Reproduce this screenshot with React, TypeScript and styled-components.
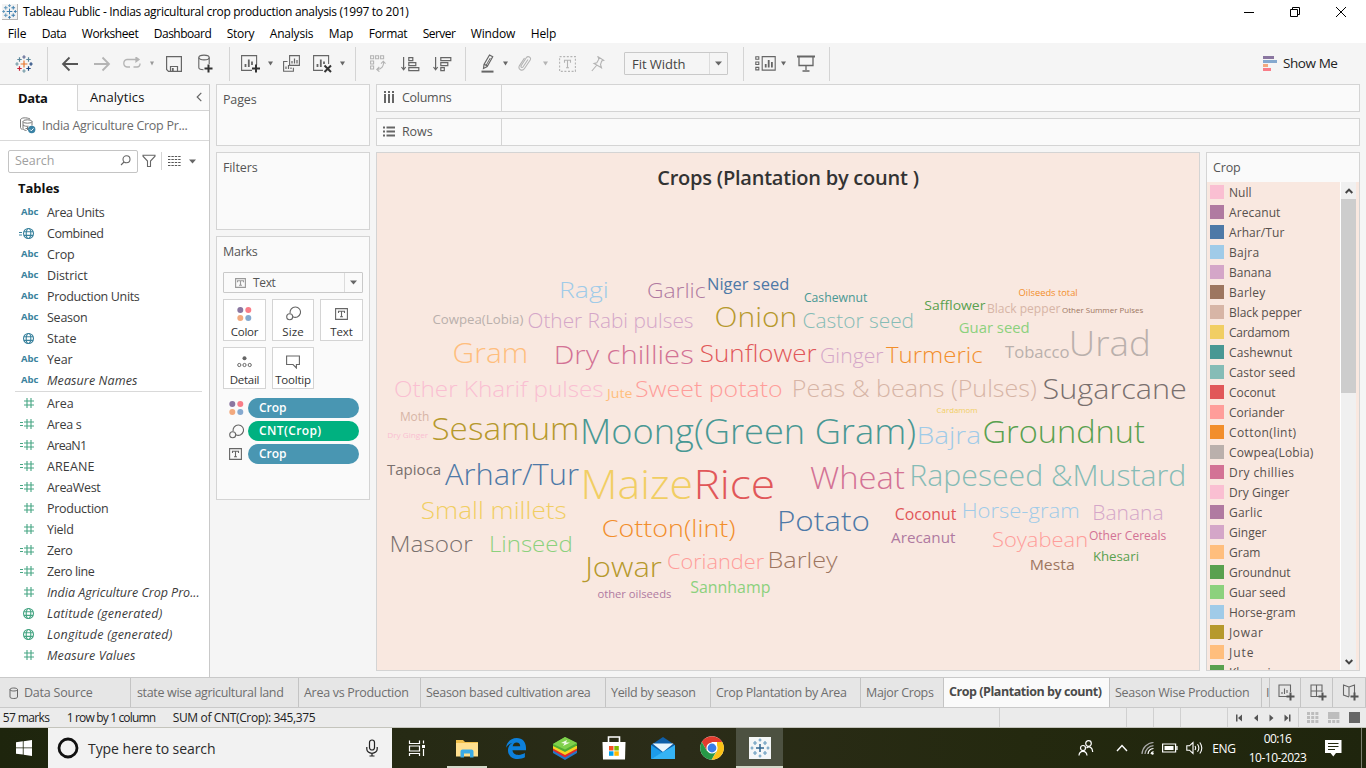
import React, { useLayoutEffect, useRef, useState } from "react";
import styled, { createGlobalStyle, css } from "styled-components";

const GlobalStyle = createGlobalStyle`
  * { box-sizing: border-box; }
  html, body { margin: 0; padding: 0; overflow: hidden; }
  body { font-family: "Open Sans", "Noto Sans", sans-serif; font-size: 12px; color: #333; background: #f5f5f5; }
  svg { display: block; flex: none; }
`;

/* ---------- text that tracks itself to a given width ---------- */

const Tracked = styled.span`
  display: inline-block;
  white-space: pre;
  flex: none;
`;

function Fit({ w, children }: { w: number; children: string }) {
  const ref = useRef<HTMLSpanElement>(null);
  const [spacing, setSpacing] = useState(0);
  useLayoutEffect(() => {
    if (ref.current) {
      const natural = ref.current.getBoundingClientRect().width;
      setSpacing((w + 0.5 - natural) / children.length);
    }
  }, [w, children]);
  return (
    <Tracked ref={ref} style={{ letterSpacing: `${spacing}px` }}>
      {children}
    </Tracked>
  );
}

/* ---------- shell ---------- */

const Window = styled.div`
  width: 1366px;
  height: 768px;
  display: flex;
  flex-direction: column;
  background: #f5f5f5;
  overflow: hidden;
`;

const TitleBar = styled.header`
  height: 23px;
  flex: none;
  display: flex;
  align-items: center;
  background: #fff;
  padding-left: 2px;
  color: #000;
  font-size: 12px;
`;
const AppIcon = styled.div`
  width: 16px;
  height: 16px;
  margin: 0 5px 0 0;
  background: #f3f3f3;
  border-right: 1px solid #b5b5b5;
  border-bottom: 1px solid #b5b5b5;
`;
const WindowButtons = styled.div`
  margin-left: auto;
  display: flex;
  align-items: center;
  height: 21px;
  padding-right: 2px;
`;
const WindowButton = styled.div`
  width: 46px;
  display: flex;
  justify-content: center;
`;

const MenuBar = styled.nav`
  height: 20px;
  flex: none;
  display: flex;
  align-items: center;
  gap: 16px;
  padding: 1px 0 0 8px;
  background: #fff;
  color: #000;
  font-size: 12px;
`;

const Toolbar = styled.div`
  height: 41px;
  flex: none;
  display: flex;
  align-items: center;
  background: #f5f5f5;
`;
const Cell = styled.div<{ $w: number }>`
  width: ${(p) => p.$w}px;
  flex: none;
  display: flex;
  justify-content: center;
  align-items: center;
`;
const Rule = styled.div<{ $h?: number }>`
  width: 1px;
  height: ${(p) => p.$h ?? 34}px;
  flex: none;
  background: #d4d4d4;
`;
const FitSelect = styled.div`
  width: 104px;
  height: 23px;
  flex: none;
  display: flex;
  align-items: center;
  border: 1px solid #c9c9c9;
  border-radius: 1px;
  background: #f5f5f5;
  font-size: 13px;
  line-height: 18px;
  color: #444;
  padding-left: 7px;
`;
const SelectArrow = styled.div<{ $w: number }>`
  margin-left: auto;
  width: ${(p) => p.$w}px;
  height: 100%;
  border-left: 1px solid #dcdcdc;
  display: flex;
  align-items: center;
  justify-content: center;
`;
const ShowMe = styled.div`
  margin-left: auto;
  display: flex;
  align-items: center;
  gap: 6px;
  width: 103px;
  height: 22px;
  margin-bottom: 1px;
  font-size: 13.5px;
  color: #222;
`;

const Workspace = styled.main`
  height: 593px;
  flex: none;
  display: flex;
`;

/* ---------- data pane ---------- */

const DataPane = styled.aside`
  width: 210px;
  flex: none;
  background: #fff;
  border-right: 1px solid #c9c9c9;
  border-top: 1px solid #d4d4d4;
`;
const PaneTabs = styled.div`
  height: 26px;
  display: flex;
`;
const PaneTab = styled.div<{ $active?: boolean }>`
  display: flex;
  align-items: center;
  font-size: 13px;
  padding-bottom: 1px;
  color: #111;
  ${(p) =>
    p.$active
      ? css`
          width: 77px;
          padding-left: 18px;
          font-weight: 700;
        `
      : css`
          flex: 1;
          padding-right: 7px;
          padding-left: 12px;
          background: #fafafa;
          border-left: 1px solid #d4d4d4;
          border-bottom: 1px solid #d4d4d4;
          justify-content: space-between;
        `}
`;
const SourceRow = styled.div`
  height: 30px;
  display: flex;
  align-items: center;
  gap: 6px;
  padding-left: 19px;
  font-size: 12.5px;
  color: #6c6c6c;
  border-bottom: 1px solid #d9d9d9;
`;
const SearchRow = styled.div`
  display: flex;
  align-items: center;
  height: 24px;
  margin: 8px 0 0 8px;
`;
const SearchBox = styled.div`
  width: 130px;
  height: 23px;
  display: flex;
  align-items: center;
  justify-content: space-between;
  border: 1px solid #c4c4c4;
  border-radius: 2px;
  padding: 0 6px;
  font-size: 12.5px;
  line-height: 17px;
  padding-bottom: 1px;
  color: #a0a0a0;
`;
const TablesTitle = styled.div`
  height: 29px;
  padding: 5px 0 0 18px;
  font-size: 13px;
  font-weight: 700;
  line-height: 20px;
  color: #111;
`;
const Field = styled.div<{ $generated?: boolean }>`
  height: 21px;
  display: flex;
  align-items: center;
  font-size: 12.5px;
  line-height: 17px;
  padding-bottom: 1px;
  color: #3c3c3c;
  font-style: ${(p) => (p.$generated ? "italic" : "normal")};
`;
const FieldIcon = styled.div`
  width: 47px;
  padding-left: 19px;
  font-style: normal;
`;
const Abc = styled.span`
  font: 700 9.5px/20px "Open Sans", sans-serif;
  color: #3a829d;
  padding-left: 2px;
`;
const FieldRule = styled.div`
  height: 1px;
  margin: 0 7px 1px 15px;
  background: #d9d9d9;
`;

/* ---------- shelves & cards ---------- */

const CardColumn = styled.div`
  width: 154px;
  margin-left: 6px;
  flex: none;
  display: flex;
  flex-direction: column;
`;
const Card = styled.section<{ $h: number; $gap: number }>`
  height: ${(p) => p.$h}px;
  margin-bottom: ${(p) => p.$gap}px;
  flex: none;
  border: 1px solid #d4d4d4;
  background: #fafafa;
  padding: 6px;
`;
const CardTitle = styled.div`
  font-size: 12.5px;
  line-height: 18px;
  color: #555;
`;
const MarkSelect = styled.div`
  height: 21px;
  margin: 11px 0 6px;
  display: flex;
  align-items: center;
  gap: 7px;
  border: 1px solid #c9c9c9;
  border-radius: 1px;
  background: #fafafa;
  padding-left: 11px;
  font-size: 12px;
  color: #555;
`;
const MarkGrid = styled.div`
  display: grid;
  grid-template-columns: 43px 42px 43px;
  grid-auto-rows: 42px;
  gap: 6px;
`;
const MarkButton = styled.div`
  border: 1px solid #d4d4d4;
  background: #fff;
  display: flex;
  flex-direction: column;
  align-items: center;
  font-size: 11.5px;
  line-height: 14px;
  color: #333;
`;
const MarkGlyph = styled.div`
  height: 25px;
  padding-top: 2px;
  display: flex;
  align-items: center;
`;
const Pills = styled.div`
  display: flex;
  flex-direction: column;
  gap: 3px;
  padding: 9px 4px 0 6px;
`;
const PillRow = styled.div`
  height: 20px;
  display: flex;
  align-items: center;
  justify-content: space-between;
`;
const Pill = styled.div<{ $green?: boolean }>`
  width: 111px;
  height: 20px;
  border-radius: 10px;
  background: ${(p) => (p.$green ? "#00b180" : "#4996b2")};
  color: #fff;
  font-size: 12px;
  font-weight: 600;
  line-height: 19px;
  padding-left: 11px;
`;

const Main = styled.div`
  width: 984px;
  margin-left: 6px;
  display: flex;
  flex-direction: column;
`;
const Shelf = styled.div`
  height: 28px;
  margin-bottom: 6px;
  flex: none;
  display: flex;
  border: 1px solid #d4d4d4;
  background: #fafafa;
`;
const ShelfLabel = styled.div<{ $gap: number }>`
  width: 125px;
  display: flex;
  align-items: center;
  gap: ${(p) => p.$gap}px;
  padding: 0 0 1px 6px;
  border-right: 1px solid #d4d4d4;
  font-size: 12.5px;
  line-height: 17px;
  color: #555;
`;
const ViewRow = styled.div`
  height: 519px;
  display: flex;
  gap: 6px;
`;
const View = styled.section`
  width: 824px;
  border: 1px solid #d4d4d4;
  background: #f9e8e0;
`;
const ViewTitle = styled.h1`
  margin: 0;
  height: 50px;
  text-align: center;
  font-size: 20px;
  font-weight: 600;
  line-height: 50px;
  color: #333;
`;
const CloudWord = styled.text<{ $small: boolean }>`
  font-family: "Open Sans", "Noto Sans", sans-serif;
  font-weight: ${(p) => (p.$small ? 400 : 300)};
`;

const Legend = styled.section`
  width: 154px;
  border: 1px solid #d4d4d4;
  background: #fafafa;
  display: flex;
  flex-direction: column;
`;
const LegendTitle = styled.div`
  height: 29px;
  flex: none;
  padding: 0 6px;
  font-size: 12.5px;
  line-height: 30px;
  color: #555;
`;
const LegendBody = styled.div`
  flex: 1;
  min-height: 0;
  display: flex;
  background: #f9e8e0;
`;
const LegendList = styled.div`
  width: 134px;
  overflow: hidden;
  border-right: 1px solid #fff;
`;
const LegendItem = styled.div`
  height: 20px;
  display: flex;
  align-items: center;
  gap: 5px;
  padding-left: 3px;
  font-size: 12px;
  color: #57504d;
`;
const Swatch = styled.i<{ $c: string }>`
  width: 14px;
  height: 14px;
  background: ${(p) => p.$c};
`;
const Scrollbar = styled.div`
  width: 15px;
  display: flex;
  flex-direction: column;
  align-items: center;
  background: #f0f0f0;
`;
const ScrollArrow = styled.div`
  height: 17px;
  display: flex;
  align-items: center;
`;
const Thumb = styled.div`
  width: 15px;
  height: 194px;
  margin-bottom: auto;
  background: #cdcdcd;
`;

/* ---------- sheet tabs, status, taskbar ---------- */

const SheetTabs = styled.div`
  height: 31px;
  flex: none;
  display: flex;
  background: #e6e6e6;
  border-top: 1px solid #c9c9c9;
  border-bottom: 1px solid #c9c9c9;
`;
const SheetTab = styled.div<{ $w: number; $active?: boolean; $pad?: number }>`
  width: ${(p) => p.$w}px;
  flex: none;
  overflow: hidden;
  display: flex;
  align-items: center;
  gap: 5px;
  padding: 0 0 ${(p) => (p.$active ? 2 : 0)}px ${(p) => p.$pad ?? 5}px;
  border-right: 1px solid #c4c4c4;
  font-size: 12.5px;
  background: ${(p) => (p.$active ? "#fafafa" : "transparent")};
  font-weight: ${(p) => (p.$active ? 700 : 400)};
  color: ${(p) => (p.$active ? "#4a4a4a" : "#6e6e6e")};
`;
const StatusBar = styled.footer`
  height: 20px;
  flex: none;
  display: flex;
  align-items: center;
  gap: 18px;
  padding-left: 3px;
  background: #ebebeb;
  font-size: 12px;
  color: #222;
  border-bottom: 1px solid #c4c4bc;
`;
const StatusRight = styled.div`
  margin-left: auto;
  height: 100%;
  display: flex;
`;
const StatusSlot = styled.div<{ $w: number }>`
  width: ${(p) => p.$w}px;
  height: 100%;
  border-left: 1px solid #d0d0d0;
  display: flex;
  align-items: center;
`;

const Taskbar = styled.div`
  height: 40px;
  flex: none;
  display: flex;
  background: linear-gradient(90deg, #1e250d 0, #262a14 30%, #2b2c18 50%, #24290f 75%, #1f250d 100%);
  color: #fff;
`;
const TaskSearch = styled.div`
  width: 344px;
  display: flex;
  align-items: center;
  background: #f2f2f2;
  color: #2b2b2b;
  font-size: 14px;
  padding: 0 13px 0 9px;
`;
const TaskLabel = styled.div`
  margin: 0 auto 0 9px;
`;
const TaskItem = styled.div<{ $w: number; $active?: boolean; $open?: boolean }>`
  width: ${(p) => p.$w}px;
  flex: none;
  display: flex;
  align-items: center;
  justify-content: center;
  background: ${(p) => (p.$active ? "#4d5141" : "transparent")};
  box-shadow: ${(p) => (p.$open ? "inset 0 -2px 0 #d3d9c9" : "none")};
`;
const Tray = styled.div`
  margin-left: auto;
  display: flex;
  align-items: center;
  font-size: 12px;
`;
const Clock = styled.div`
  width: 81px;
  text-align: center;
  line-height: 19px;
  padding-bottom: 1px;
`;
const DesktopEdge = styled.div`
  width: 5px;
  height: 40px;
  border-left: 1px solid #7b7e70;
`;

/* ---------- icons ---------- */

function Ic({ w, h, c = "none", s = "#666", sw = 1, children }: { w: number; h: number; c?: string; s?: string; sw?: number; children: React.ReactNode }) {
  return (
    <svg width={w} height={h} viewBox={`0 0 ${w} ${h}`} fill={c} stroke={s} strokeWidth={sw}>
      {children}
    </svg>
  );
}

const Caret = ({ c = "#666", w = 5 }: { c?: string; w?: number }) => (
  <Ic w={w + 2} h={5} c={c} s="none">
    <path d={`M1 0.5h${w}l${-w / 2} 4z`} />
  </Ic>
);

function Sparkle({ size, colors }: { size: number; colors: string[] }) {
  const pluses: [number, number, number, number][] = [
    [9, 9, 3.4, 0],
    [9, 2, 1.7, 1],
    [9, 16, 1.7, 2],
    [2, 9, 1.7, 3],
    [16, 9, 1.7, 4],
    [4.5, 4.5, 2.2, 5],
    [13.5, 4.5, 2.2, 6],
    [4.5, 13.5, 2.2, 7],
    [13.5, 13.5, 2.2, 8],
  ];
  return (
    <svg width={size} height={size} viewBox="0 0 18 18" fill="none" strokeWidth="1.2">
      {pluses.map(([x, y, r, i]) => (
        <path key={i} stroke={colors[i % colors.length]} d={`M${x - r} ${y}h${2 * r}M${x} ${y - r}v${2 * r}`} />
      ))}
    </svg>
  );
}

const Arrow = ({ flip, c }: { flip?: boolean; c: string }) => (
  <Ic w={18} h={16} s={c} sw={1.8}>
    <path d={flip ? "M1 8h15M9.500 1.500L16 8l-6.500 6.500" : "M17 8H2M8.500 1.500L2 8l6.500 6.500"} />
  </Ic>
);
const Loop = () => (
  <Ic w={20} h={13} s="#b4b4b4" sw={1.3}>
    <path d="M8 10H5a3.800 3.800 0 0 1 0-7.500h11" />
    <path d="M11.500 10H15a3 3 0 0 0 3-3.500" />
    <path d="M14 .3l3 2.200-3 2.300z" fill="#b4b4b4" />
  </Ic>
);
const Save = () => (
  <Ic w={16} h={16} sw={1.2}>
    <path d="M.6.6h14.800v14.800H2.500L.6 13.500zM4.500 15v-4.500h7V15" />
    <path d="M6.800 12v3" strokeWidth="1.800" />
  </Ic>
);
const DbPlus = () => (
  <Ic w={17} h={19} sw={1.1}>
    <ellipse cx="7" cy="3.500" rx="5.200" ry="2.400" />
    <path d="M1.800 3.500v10c0 1.200 2 2.200 4.700 2.300M12.200 3.500V10" />
    <path d="M7.500 14.500h8M11.500 10.500v8" stroke="#333" strokeWidth="2" />
  </Ic>
);
const SheetPlus = () => (
  <Ic w={19} h={18} sw={1.1}>
    <path d="M11 15.400H.6V.6h15v9.500" />
    <path d="M4.500 12V9M7.800 12V4.500M11 10V6.500" strokeWidth="1.800" />
    <path d="M11 13.500h8M15 9.500v8" stroke="#333" strokeWidth="2" />
  </Ic>
);
const SheetDup = () => (
  <Ic w={17} h={17} sw={1.1}>
    <path d="M6.600.6h9.800v9.800H6.600zM4.500 6.500H.6v9.800h9.800v-3.500" />
    <path d="M9 8.500V6M11.500 8.500V3.500M14 8.500V5M3 14v-2.500M5.500 14v-4M8 14v-1.500" strokeWidth="1.200" />
  </Ic>
);
const SheetClear = () => (
  <Ic w={19} h={18} sw={1.1}>
    <path d="M10 15.400H.6V.6h15V9" />
    <path d="M4.500 12V9M7.800 12V4.500M11 9V6.500" strokeWidth="1.800" />
    <path d="M11.500 10.500l6.500 6.500M18 10.500L11.500 17" stroke="#333" strokeWidth="2" />
  </Ic>
);
const Swap = () => (
  <Ic w={17} h={17} s="#b4b4b4" sw={1.1}>
    <path d="M1.600.8h3v3h-3zM6.600.8h3v3h-3zM11.600.8h3v3h-3zM1.600 6h3v3h-3zM1.600 11h3v3h-3z" />
    <path d="M14.500 7c.5 4-2 7-6 7.500M12 8.700l2.300-2.500 2.200 2.400M10.300 12l-2.500 2.500 2.600 2.200" />
  </Ic>
);
const Sort = ({ desc }: { desc?: boolean }) => (
  <Ic w={19} h={16} sw={1.2}>
    <path d="M2.600 1v12M.5 11l2.100 2.800L4.700 11" />
    <path d={desc ? "M7.800 1.600h10v3h-10zM7.800 6.600h7v3h-7zM7.800 11.600h3.500v3H7.800z" : "M7.800 1.600h4v3h-4zM7.800 6.600h7v3h-7zM7.800 11.600h10v3h-10z"} />
  </Ic>
);
const Highlighter = () => (
  <Ic w={14} h={19} sw={1.2}>
    <path d="M8.500 1l3.200 1.800-5.500 9.700-3.700 2 .5-4zM3.300 10.300l3 1.800" />
    <path d="M9.300 4L5 11.500" strokeWidth="1" />
    <path d="M.5 17.600h12" strokeWidth="2" />
  </Ic>
);
const Clip = () => (
  <Ic w={14} h={17} s="#b4b4b4" sw={1.1}>
    <path d="M10 4.500L5 12c-.8 1.200-2.600 0-1.900-1.200l5.200-8c1.700-2.500 5.400-.4 3.900 2.200L6.500 13.500c-2.300 3.500-7 .6-5-2.900l5-7.600" />
  </Ic>
);
const TextFrame = ({ dashed, size = 15, c = "#666", h }: { dashed?: boolean; size?: number; c?: string; h?: number }) => {
  const hh = h ?? size;
  const m = size / 2;
  return (
    <Ic w={size} h={hh} s={c} sw={1.1}>
      <path d={`M.6.6h${size - 1.2}v${hh - 1.2}h${1.2 - size}z`} strokeDasharray={dashed ? "2 1.6" : undefined} />
      <path d={`M${m - 3} ${hh * 0.42}V${hh * 0.27}h6v${hh * 0.15}M${m} ${hh * 0.27}v${hh * 0.46}M${m - 1.5} ${hh * 0.73}h3`} />
    </Ic>
  );
};
const Pin = () => (
  <Ic w={14} h={16} s="#b4b4b4" sw={1.1}>
    <path d="M7 .8l5.700 3.500-2 .7-1.200 3.500 1 3.300L3 7.500l2.800-.8L7.800 3.200zM5.500 9.500L.8 15" />
  </Ic>
);
const Cards = () => (
  <Ic w={21} h={15} sw={1.1}>
    <path d="M7.200.6h13v13.500h-13z" />
    <path d="M.8.8h3v2.500h-3zM.8 6h3v2.500h-3zM.8 11.400h3v2.500h-3z" />
    <path d="M10.700 11.500V8M13.700 11.500V4M16.900 11.500V6" strokeWidth="1.800" />
  </Ic>
);
const Present = () => (
  <Ic w={18} h={17} sw={1.3}>
    <path d="M0 1.500h18" strokeWidth="2" />
    <path d="M2 2v8.500h14V2M9 10.500V15M5.500 16h7" />
  </Ic>
);
const SourceIcon = () => (
  <Ic w={17} h={17} s="#777" sw={1}>
    <path d="M11 2C8 .3 1.500.3 1.500 3v7.500c0 1 .8 1.600 2 2" />
    <ellipse cx="8.500" cy="4.500" rx="4.500" ry="1.700" />
    <path d="M4 4.500v7c0 1 1.500 1.800 3.500 2M13 4.500v4M4 8c1.500 1.200 3.500 1.500 5.500 1.200M6.500 11.500h2.500M8 10l1.500 1.500L8 13" />
    <circle cx="12.700" cy="12.500" r="3.700" fill="#3a82a5" stroke="none" />
    <path d="M11 12.500l1.300 1.300 2.200-2.400" stroke="#fff" />
  </Ic>
);
const Magnifier = () => (
  <Ic w={11} h={11} sw={1.1}>
    <circle cx="6.500" cy="4.300" r="3.500" />
    <path d="M4 7L1 10" />
  </Ic>
);
const Funnel = () => (
  <Ic w={14} h={14} sw={1.1}>
    <path d="M1 1.200h12v1L8.500 7v5.500h-3V7L1 2.200z" />
  </Ic>
);
const ListIcon = () => (
  <Ic w={13} h={10} sw={1} s="#555">
    <path d="M0 .5h13M0 3.500h13M0 6.500h13M0 9.500h13" strokeDasharray="2.400 1" />
  </Ic>
);
const Globe = ({ c, calc }: { c: string; calc?: boolean }) => (
  <Ic w={17} h={13} s={c} sw={1.1}>
    {calc && <path d="M0 5.500h3M0 8h3" />}
    <circle cx="9.500" cy="6.500" r="5" />
    <ellipse cx="9.500" cy="6.500" rx="2.300" ry="5" />
    <path d="M5 4.700h9M5 8.400h9" />
  </Ic>
);
const Hash = ({ calc }: { calc?: boolean }) => (
  <Ic w={17} h={12} s="#46a583" sw={1.1}>
    {calc && <path d="M1 4.500h3M1 7.500h3" />}
    <path d="M5 4h10M5 8h10M8 1v10M12 1v10" />
  </Ic>
);
const Dots = () => (
  <Ic w={15} h={14} s="none">
    <circle cx="3.300" cy="3" r="3" fill="#8a76a0" />
    <circle cx="11.300" cy="3" r="3" fill="#f97d88" />
    <circle cx="3.300" cy="11" r="3" fill="#f2a97e" />
    <circle cx="11.300" cy="11" r="3" fill="#85a9cf" />
  </Ic>
);
const SizeIcon = () => (
  <Ic w={15} h={15} sw={1.1}>
    <path d="M4.200 7.200A5.200 5.200 0 1 1 6.800 10.700" />
    <circle cx="3.700" cy="10.800" r="3" />
  </Ic>
);
const Detail = () => (
  <Ic w={15} h={12} sw={1}>
    <circle cx="7.500" cy="2.200" r="2" fill="#666" stroke="none" />
    <circle cx="2.300" cy="9" r="1.600" />
    <circle cx="7.500" cy="9" r="1.600" />
    <circle cx="12.700" cy="9" r="1.600" />
  </Ic>
);
const Tooltip = () => (
  <Ic w={14} h={14} sw={1.1}>
    <path d="M.6 1h12.800v8.500h-3v3.500l-3.400-3.500H.6z" />
  </Ic>
);
const ColumnsIcon = () => (
  <Ic w={12} h={13} sw={2}>
    <path d="M2 0v2M6 0v2M10 0v2M2 3v9M6 3v9M10 3v9" />
  </Ic>
);
const RowsIcon = () => (
  <Ic w={13} h={11} sw={2}>
    <path d="M0 1.500h2M0 5.500h2M0 9.500h2M3.500 1.500H12M3.500 5.500H12M3.500 9.500H12" />
  </Ic>
);
const NewTab = ({ kind }: { kind: "sheet" | "dash" | "story" }) => (
  <Ic w={17} h={17} sw={1.1}>
    {kind === "sheet" && <path d="M9 12.500H1V1h11.500v7M4 10V8M6.500 10V4.500M9 9V6" />}
    {kind === "dash" && <path d="M9 12.500H1V1h11v7M1 7h11M6.500 1v11.500" />}
    {kind === "story" && <path d="M7 3v9.500M7 3L1.500 1v10L7 13M7 3l5.500-2v8" />}
    <path d="M8.500 12.500h8M12.500 8.500v8" strokeWidth="2" stroke="#555" />
  </Ic>
);
const Blocks = ({ kind }: { kind: 0 | 1 | 2 }) => (
  <Ic w={12} h={11} s="none" c={kind === 2 ? "#666" : "#bdbdbd"}>
    {kind === 0 && <path d="M0 0h3v3H0zM4.200 0h3v3h-3zM8.400 0h3v3h-3zM0 4h3v3H0zM4.200 4h3v3h-3zM8.400 4h3v3h-3zM0 8h3v3H0zM4.200 8h3v3h-3zM8.400 8h3v3h-3z" />}
    {kind === 1 && <path d="M0 0h11.400v7H0zM0 8h3v3H0zM4.200 8h3v3h-3zM8.400 8h3v3h-3z" />}
    {kind === 2 && <path d="M0 0h11v11H0z" />}
  </Ic>
);

/* ---------- data ---------- */

const C = {
  pink: "#fabfd2", purple: "#b07aa1", blue: "#4e79a7", sky: "#a0cbe8", lilac: "#d4a6c8",
  brown: "#9d7660", tan: "#d7b5a6", yellow: "#f1ce63", teal: "#499894", mint: "#86bcb6",
  red: "#e15759", salmon: "#ff9d9a", orange: "#f28e2b", stone: "#bab0ac", rose: "#d37295",
  peach: "#ffbe7d", green: "#59a14f", lime: "#8cd17d", olive: "#b6992d", gray: "#79706e",
};

type Kind = "abc" | "geo" | "geoCalc" | "num" | "numCalc" | "geoNum";
const dimensions: [string, number, Kind, boolean?][] = [
  ["Area Units", 57, "abc"], ["Combined", 56, "geoCalc"], ["Crop", 27, "abc"], ["District", 40, "abc"],
  ["Production Units", 92, "abc"], ["Season", 40, "abc"], ["State", 29, "geo"], ["Year", 25, "abc"],
  ["Measure Names", 90, "abc", true],
];
const measures: [string, number, Kind, boolean?][] = [
  ["Area", 26, "num"], ["Area s", 34, "numCalc"], ["AreaN1", 39, "numCalc"], ["AREANE", 47, "numCalc"],
  ["AreaWest", 53, "numCalc"], ["Production", 61, "num"], ["Yield", 26, "num"], ["Zero", 25, "numCalc"],
  ["Zero line", 47, "numCalc"], ["India Agriculture Crop Pro...", 152, "num", true],
  ["Latitude (generated)", 115, "geoNum", true], ["Longitude (generated)", 125, "geoNum", true],
  ["Measure Values", 88, "num", true],
];

const menus: [string, number][] = [
  ["File", 18], ["Data", 24], ["Worksheet", 56], ["Dashboard", 57], ["Story", 27], ["Analysis", 43],
  ["Map", 24], ["Format", 38], ["Server", 32], ["Window", 44], ["Help", 25],
];

const legend: [string, number, string][] = [
  ["Null", 22, C.pink], ["Arecanut", 51, C.purple], ["Arhar/Tur", 55, C.blue], ["Bajra", 30, C.sky],
  ["Banana", 42, C.lilac], ["Barley", 36, C.brown], ["Black pepper", 72, C.tan], ["Cardamom", 60, C.yellow],
  ["Cashewnut", 63, C.teal], ["Castor seed", 66, C.mint], ["Coconut", 46, C.red], ["Coriander", 55, C.salmon],
  ["Cotton(lint)", 67, C.orange], ["Cowpea(Lobia)", 84, C.stone], ["Dry chillies", 65, C.rose],
  ["Dry Ginger", 60, C.pink], ["Garlic", 33, C.purple], ["Ginger", 37, C.lilac], ["Gram", 31, C.peach],
  ["Groundnut", 61, C.green], ["Guar seed", 56, C.lime], ["Horse-gram", 66, C.sky], ["Jowar", 34, C.olive],
  ["Jute", 25, C.peach], ["Khesari", 41, C.green],
];

/* word, left, right, baseline, size, colour */
const words: [string, number, number, number, number, string][] = [
  ["Ragi", 561, 607, 298, 22, C.sky],
  ["Garlic", 648, 705, 298, 21, C.purple],
  ["Niger seed", 708.5, 788, 290, 16, C.blue],
  ["Cowpea(Lobia)", 433, 523, 324, 12.5, C.stone],
  ["Other Rabi pulses", 528.5, 693, 328, 19.5, C.lilac],
  ["Onion", 716, 795, 327, 28, C.olive],
  ["Gram", 454, 526, 363, 28, C.peach],
  ["Dry chillies", 556, 693, 364, 26, C.rose],
  ["Sunflower", 701, 816, 361.5, 23.5, C.red],
  ["Other Kharif pulses", 395, 603, 397, 22, C.pink],
  ["Jute", 606, 632, 398, 13.5, C.peach],
  ["Sweet potato", 636, 782, 397, 22, C.salmon],
  ["Cashewnut", 804.5, 867, 302, 12, C.teal],
  ["Oilseeds total", 1019, 1077, 296, 9.3, C.orange],
  ["Safflower", 925, 985, 310, 13.5, C.green],
  ["Black pepper", 988, 1060, 313, 12.5, C.tan],
  ["Other Summer Pulses", 1062.5, 1143, 312.7, 8, C.brown],
  ["Castor seed", 803.5, 912.5, 328, 19.5, C.mint],
  ["Guar seed", 959.5, 1028.5, 333, 15, C.lime],
  ["Tobacco", 1005, 1069, 358, 16.5, C.stone],
  ["Urad", 1072, 1148, 356, 35, C.stone],
  ["Ginger", 821, 883, 363, 19.5, C.lilac],
  ["Turmeric", 886, 982, 363, 22.5, C.orange],
  ["Peas & beans (Pulses)", 794, 1036, 396.5, 24, C.tan],
  ["Sugarcane", 1044, 1186, 399, 28, C.gray],
  ["Cardamom", 937, 977, 412.7, 7.8, C.yellow],
  ["Moth", 401, 429, 421, 12, C.tan],
  ["Dry Ginger", 388, 428, 437.7, 8, C.pink],
  ["Sesamum", 433, 577, 440, 31.5, C.olive],
  ["Moong(Green Gram)", 583, 915, 444, 34.5, C.teal],
  ["Bajra", 919, 979, 444, 24.5, C.sky],
  ["Groundnut", 984, 1144, 443, 31, C.green],
  ["Tapioca", 387, 440, 475, 15, C.gray],
  ["Arhar/Tur", 445, 578, 485, 29.5, C.blue],
  ["Maize", 584, 692, 499, 39.5, C.yellow],
  ["Rice", 697, 774, 499, 40, C.red],
  ["Wheat", 810, 904, 489, 30.5, C.rose],
  ["Rapeseed &Mustard", 912, 1184, 486, 29, C.mint],
  ["Small millets", 422, 566, 519, 23.5, C.yellow],
  ["Cotton(lint)", 603, 735, 537, 23.5, C.orange],
  ["Potato", 779.5, 869, 531, 28, C.blue],
  ["Coconut", 895.5, 956, 520, 15.5, C.red],
  ["Horse-gram", 963.5, 1078, 518, 20.5, C.sky],
  ["Banana", 1094, 1162, 520, 19.5, C.lilac],
  ["Masoor", 391.5, 472, 552, 22.5, C.gray],
  ["Linseed", 491, 571, 552, 22.5, C.lime],
  ["Arecanut", 891, 955, 543, 15, C.purple],
  ["Soyabean", 993, 1086.5, 547, 20.5, C.salmon],
  ["Other Cereals", 1089.5, 1166, 540, 12, C.rose],
  ["Khesari", 1094, 1138, 561, 12.5, C.green],
  ["Mesta", 1031, 1073.5, 570, 15, C.brown],
  ["Jowar", 583, 661, 577, 28, C.olive],
  ["Coriander", 668, 763.5, 569, 21, C.salmon],
  ["Barley", 769.5, 837, 568, 22.5, C.brown],
  ["Sannhamp", 691, 770, 593, 16, C.lime],
  ["other oilseeds", 598, 671, 598.3, 11.5, C.purple],
];

const leftBearing = (ch: string) => (/[BDHKLMNPRU]/.test(ch) ? 0.09 : /[OGCSo]/.test(ch) ? 0.05 : ch === "J" ? -0.08 : 0);
const rightBearing = (ch: string) => (/[damnil]/.test(ch) ? 0.08 : 0.03);

function WordCloud() {
  return (
    <svg width="822" height="467" viewBox="377 203 822 467">
      {words.map(([t, l, r, y, size, color]) => {
        const lb = leftBearing(t[0]) * size;
        const rb = rightBearing(t[t.length - 1]) * size;
        return (
          <CloudWord
            key={t}
            $small={size < 17}
            x={l - lb}
            y={y}
            fontSize={size}
            fill={color}
            textLength={r - l + lb + rb}
            lengthAdjust="spacingAndGlyphs"
          >
            {t}
          </CloudWord>
        );
      })}
    </svg>
  );
}

const BLUE = "#3a829d";
const GREEN = "#46a583";

function KindIcon({ kind }: { kind: Kind }) {
  switch (kind) {
    case "abc":
      return <Abc>Abc</Abc>;
    case "geo":
      return <Globe c={BLUE} />;
    case "geoCalc":
      return <Globe c={BLUE} calc />;
    case "geoNum":
      return <Globe c={GREEN} />;
    case "num":
      return <Hash />;
    default:
      return <Hash calc />;
  }
}

const FieldList = ({ items }: { items: typeof dimensions }) => (
  <>
    {items.map(([name, w, kind, gen]) => (
      <Field key={name} $generated={gen}>
        <FieldIcon>
          <KindIcon kind={kind} />
        </FieldIcon>
        <Fit w={w}>{name}</Fit>
      </Field>
    ))}
  </>
);

const DataPanel = () => (
  <DataPane>
    <PaneTabs>
      <PaneTab $active>
        <Fit w={29}>Data</Fit>
      </PaneTab>
      <PaneTab>
        <Fit w={54}>Analytics</Fit>
        <Ic w={6} h={10} sw={1.2}>
          <path d="M5.300.8L1.200 5l4.100 4.200" />
        </Ic>
      </PaneTab>
    </PaneTabs>
    <SourceRow>
      <SourceIcon />
      <Fit w={145}>India Agriculture Crop Pr...</Fit>
    </SourceRow>
    <SearchRow>
      <SearchBox>
        <Fit w={39}>Search</Fit>
        <Magnifier />
      </SearchBox>
      <Cell $w={21}>
        <Funnel />
      </Cell>
      <Cell $w={2} />
      <Rule $h={18} />
      <Cell $w={24}>
        <ListIcon />
      </Cell>
      <Cell $w={13}>
        <Caret w={7} />
      </Cell>
    </SearchRow>
    <TablesTitle>
      <Fit w={41}>Tables</Fit>
    </TablesTitle>
    <FieldList items={dimensions} />
    <FieldRule />
    <FieldList items={measures} />
  </DataPane>
);

const MarksCards = () => (
  <CardColumn>
    <Card $h={62} $gap={6}>
      <CardTitle>
        <Fit w={33}>Pages</Fit>
      </CardTitle>
    </Card>
    <Card $h={78} $gap={6}>
      <CardTitle>
        <Fit w={34}>Filters</Fit>
      </CardTitle>
    </Card>
    <Card $h={264} $gap={0}>
      <CardTitle>
        <Fit w={34}>Marks</Fit>
      </CardTitle>
      <MarkSelect>
        <TextFrame size={11} h={10} c="#999" />
        <Fit w={22}>Text</Fit>
        <SelectArrow $w={18}>
          <Caret w={7} />
        </SelectArrow>
      </MarkSelect>
      <MarkGrid>
        <MarkButton>
          <MarkGlyph><Dots /></MarkGlyph>
          <Fit w={27}>Color</Fit>
        </MarkButton>
        <MarkButton>
          <MarkGlyph><SizeIcon /></MarkGlyph>
          <Fit w={21}>Size</Fit>
        </MarkButton>
        <MarkButton>
          <MarkGlyph><TextFrame size={13} h={12} /></MarkGlyph>
          <Fit w={22}>Text</Fit>
        </MarkButton>
        <MarkButton>
          <MarkGlyph><Detail /></MarkGlyph>
          <Fit w={29}>Detail</Fit>
        </MarkButton>
        <MarkButton>
          <MarkGlyph><Tooltip /></MarkGlyph>
          <Fit w={35}>Tooltip</Fit>
        </MarkButton>
      </MarkGrid>
      <Pills>
        <PillRow>
          <Dots />
          <Pill><Fit w={27}>Crop</Fit></Pill>
        </PillRow>
        <PillRow>
          <SizeIcon />
          <Pill $green><Fit w={62}>CNT(Crop)</Fit></Pill>
        </PillRow>
        <PillRow>
          <TextFrame size={13} h={12} />
          <Pill><Fit w={27}>Crop</Fit></Pill>
        </PillRow>
      </Pills>
    </Card>
  </CardColumn>
);

const sheetTabs: [string, number, number, number][] = [
  ["state wise agricultural land", 146, 168, 6], ["Area vs Production", 104, 122, 5], ["Season based cultivation area", 164, 185, 5],
  ["Yeild by season", 84, 105, 5], ["Crop Plantation by Area", 130, 150, 5], ["Major Crops", 67, 83, 5],
];

export default function App() {
  return (
    <Window>
      <GlobalStyle />
      <TitleBar>
        <AppIcon>
          <Sparkle size={15} colors={["#3f7fae", "#5f97bd"]} />
        </AppIcon>
        <Fit w={385}>Tableau Public - Indias agricultural crop production analysis (1997 to 201)</Fit>
        <WindowButtons>
          <WindowButton>
            <Ic w={10} h={10} s="#000"><path d="M0 5.500h10" /></Ic>
          </WindowButton>
          <WindowButton>
            <Ic w={10} h={10} s="#000"><path d="M.5 2.500h7v7h-7zM2.500 2.500v-2h7v7h-2" /></Ic>
          </WindowButton>
          <WindowButton>
            <Ic w={10} h={10} s="#000"><path d="M0 0l10 10M10 0L0 10" /></Ic>
          </WindowButton>
        </WindowButtons>
      </TitleBar>
      <MenuBar>
        {menus.map(([m, w]) => (
          <Cell key={m} $w={w}><Fit w={w}>{m}</Fit></Cell>
        ))}
      </MenuBar>
      <Toolbar>
        <Cell $w={47}>
          <Sparkle size={18} colors={["#e8762c", "#5b6591", "#7199a6", "#7199a6", "#1f457e", "#5b879b", "#5b879b", "#c72035", "#1f457e"]} />
        </Cell>
        <Rule />
        <Cell $w={6} />
        <Cell $w={32}><Arrow c="#555" /></Cell>
        <Cell $w={32}><Arrow flip c="#b4b4b4" /></Cell>
        <Cell $w={27}><Loop /></Cell>
        <Cell $w={14}><Caret c="#999" w={4} /></Cell>
        <Cell $w={30}><Save /></Cell>
        <Cell $w={32}><DbPlus /></Cell>
        <Cell $w={8} />
        <Rule />
        <Cell $w={6} />
        <Cell $w={29}><SheetPlus /></Cell>
        <Cell $w={10}><Caret /></Cell>
        <Cell $w={33}><SheetDup /></Cell>
        <Cell $w={28}><SheetClear /></Cell>
        <Cell $w={12}><Caret /></Cell>
        <Cell $w={7} />
        <Rule />
        <Cell $w={5} />
        <Cell $w={32}><Swap /></Cell>
        <Cell $w={34}><Sort /></Cell>
        <Cell $w={30}><Sort desc /></Cell>
        <Cell $w={8} />
        <Rule />
        <Cell $w={9} />
        <Cell $w={26}><Highlighter /></Cell>
        <Cell $w={8}><Caret /></Cell>
        <Cell $w={32}><Clip /></Cell>
        <Cell $w={8}><Caret c="#b4b4b4" /></Cell>
        <Cell $w={37}><TextFrame dashed size={17} h={16} c="#b4b4b4" /></Cell>
        <Cell $w={23}><Pin /></Cell>
        <Cell $w={15} />
        <FitSelect>
          <Fit w={53}>Fit Width</Fit>
          <SelectArrow $w={18}><Caret w={7} /></SelectArrow>
        </FitSelect>
        <Cell $w={15} />
        <Rule />
        <Cell $w={7} />
        <Cell $w={29}><Cards /></Cell>
        <Cell $w={7}><Caret /></Cell>
        <Cell $w={37}><Present /></Cell>
        <Cell $w={5} />
        <Rule />
        <ShowMe>
          <Ic w={14} h={15} s="none">
            <path d="M0 0h11v3H0z" fill="#8a76a0" />
            <path d="M0 4h14v3H0z" fill="#85a9cf" />
            <path d="M0 8h5v3H0z" fill="#f2a97e" />
            <path d="M0 12h8v3H0z" fill="#f97d88" />
          </Ic>
          <Fit w={54}>Show Me</Fit>
        </ShowMe>
      </Toolbar>
      <Workspace>
        <DataPanel />
        <MarksCards />
        <Main>
          <Shelf>
            <ShelfLabel $gap={7}><ColumnsIcon /><Fit w={49}>Columns</Fit></ShelfLabel>
          </Shelf>
          <Shelf>
            <ShelfLabel $gap={6}><RowsIcon /><Fit w={30}>Rows</Fit></ShelfLabel>
          </Shelf>
          <ViewRow>
            <View>
              <ViewTitle><Fit w={261}>Crops (Plantation by count )</Fit></ViewTitle>
              <WordCloud />
            </View>
            <Legend>
              <LegendTitle><Fit w={27}>Crop</Fit></LegendTitle>
              <LegendBody>
                <LegendList>
                  {legend.map(([name, w, color]) => (
                    <LegendItem key={name}>
                      <Swatch $c={color} />
                      <Fit w={w}>{name}</Fit>
                    </LegendItem>
                  ))}
                </LegendList>
                <Scrollbar>
                  <ScrollArrow>
                    <Ic w={8} h={6} s="#444" sw={2}><path d="M.7 5L4 1.600 7.300 5" /></Ic>
                  </ScrollArrow>
                  <Thumb />
                  <ScrollArrow>
                    <Ic w={8} h={6} s="#444" sw={2}><path d="M.7 1L4 4.400 7.300 1" /></Ic>
                  </ScrollArrow>
                </Scrollbar>
              </LegendBody>
            </Legend>
          </ViewRow>
        </Main>
      </Workspace>
      <SheetTabs>
        <SheetTab $w={131} $pad={9}>
          <Ic w={10} h={12} s="#666"><path d="M1 2.500v7.500c0 2 7.500 2 7.500 0V2.500c0-2-7.500-2-7.500 0s7.500 2 7.500 0" /></Ic>
          <Fit w={68}>Data Source</Fit>
        </SheetTab>
        {sheetTabs.map(([name, w, tab, pad]) => (
          <SheetTab key={name} $w={tab} $pad={pad}><Fit w={w}>{name}</Fit></SheetTab>
        ))}
        <SheetTab $w={166} $active><Fit w={152}>Crop (Plantation by count)</Fit></SheetTab>
        <SheetTab $w={152}><Fit w={134}>Season Wise Production</Fit></SheetTab>
        <SheetTab $w={8} $pad={4}>I</SheetTab>
        <SheetTab $w={31} $pad={8}><NewTab kind="sheet" /></SheetTab>
        <SheetTab $w={32} $pad={9}><NewTab kind="dash" /></SheetTab>
        <SheetTab $w={33} $pad={9}><NewTab kind="story" /></SheetTab>
      </SheetTabs>
      <StatusBar>
        <Cell $w={46}><Fit w={46}>57 marks</Fit></Cell>
        <Cell $w={88}><Fit w={88}>1 row by 1 column</Fit></Cell>
        <Cell $w={142}><Fit w={142}>SUM of CNT(Crop): 345,375</Fit></Cell>
        <StatusRight>
          <StatusSlot $w={127} />
          <StatusSlot $w={27} />
          <StatusSlot $w={27} />
          <StatusSlot $w={47} />
          <StatusSlot $w={71}>
            <Ic w={70} h={8} s="none" c="#555">
              <path d="M8 .5h1.500v7H8zM14 .5v7l-4-3.500zM30 .5v7l-4-3.500zM41.500.5v7l4-3.500zM56.500.5v7l4-3.500zM61 .5h1.500v7H61z" />
            </Ic>
          </StatusSlot>
          <StatusSlot $w={68}>
            <Cell $w={8} />
            <Blocks kind={0} />
            <Cell $w={9} />
            <Blocks kind={1} />
            <Cell $w={9} />
            <Blocks kind={2} />
          </StatusSlot>
        </StatusRight>
      </StatusBar>
      <Taskbar>
        <TaskItem $w={48}>
          <Ic w={16} h={16} s="none" c="#fff">
            <path d="M0 2.300L6.800 1.300v6.200H0zM7.600 1.200L16 0v7.500H7.600zM0 8.300h6.800v6.300L0 13.700zM7.600 8.300H16V16l-8.400-1.200z" />
          </Ic>
        </TaskItem>
        <TaskSearch>
          <Ic w={22} h={22} s="#111" sw={2.8}><circle cx="11" cy="11" r="9" /></Ic>
          <TaskLabel><Fit w={127}>Type here to search</Fit></TaskLabel>
          <Ic w={14} h={18} s="#222" sw={1.2}>
            <rect x="4.500" y="1" width="5" height="10" rx="2.500" />
            <path d="M1.800 8v2a5.200 4.300 0 0 0 10.400 0V8M7 14.500V17M4.500 17h5" />
          </Ic>
        </TaskSearch>
        <TaskItem $w={49}>
          <Ic w={18} h={16} s="#fff" sw={1.2}>
            <path d="M1.500.5v3h10v-3M1.500 6h10v5h-10zM1.500 16v-2.500h10V16M15.500.5v3M15.500 9v7" />
            <path d="M14 6.500h3" strokeWidth="3" />
          </Ic>
        </TaskItem>
        <Cell $w={6} />
        <TaskItem $w={40} $open>
          <Ic w={22} h={19} s="none">
            <path d="M0 1h7l2 2h13v14H0z" fill="#f0c04c" />
            <path d="M0 4h22v13.500H0z" fill="#ffe08f" />
            <path d="M4.500 18.500v-6q0-2 2-2h9q2 0 2 2v6h-3.500v-4H8v4z" fill="#3aabe6" />
          </Ic>
        </TaskItem>
        <Cell $w={4} />
        <TaskItem $w={49}>
          <Ic w={20} h={21} s="none" c="#0d80dc">
            <path d="M0 9.700C1 3.500 5.300 0 10.700 0 16.500 0 20 4.200 20 9.800v2.400H6.500c.2 3 2.800 4.700 6.200 4.700 2.300 0 4.400-.7 6.200-1.800v4.200c-2 1.100-4.300 1.700-7 1.700-6 0-9.900-3.500-9.900-8.800 0-3.400 1.700-6 4.500-7.500C3.500 5.700 1.500 7.200 0 9.700zM6.700 8.300h7.500c0-2.300-1.300-3.800-3.600-3.800-2.200 0-3.600 1.500-3.900 3.800z" />
          </Ic>
        </TaskItem>
        <TaskItem $w={49}>
          <Ic w={24} h={23} s="none">
            <path d="M0 13l12-6 12 6v3l-12 7-12-7z" fill="#2478c8" />
            <path d="M0 11l12-6 12 6v2.500l-12 7-12-7z" fill="#e12a2a" />
            <path d="M0 9l12-6 12 6v2.500l-12 6.500-12-6.500z" fill="#f7d420" />
            <path d="M0 7l12-7 12 6v2.500L12 15 0 9z" fill="#4fae33" />
            <path d="M0 7l12-7 12 6-12 6.500z" fill="#7fd04c" />
            <path d="M8 6l6-3-1 2.500h4L10 9l1.500-2.500z" fill="#f1fbe8" />
          </Ic>
        </TaskItem>
        <TaskItem $w={49}>
          <Ic w={24} h={24} s="none">
            <path d="M6.500 7V1h11v6" fill="none" stroke="#fff" strokeWidth="1.600" />
            <path d="M.5 6h23l-.5 17.500H1z" fill="#fff" />
            <path d="M7 10h4.500v4.500H7z" fill="#f25022" />
            <path d="M12.300 10h4.500v4.500h-4.500z" fill="#7fba00" />
            <path d="M7 15.300h4.500v4.500H7z" fill="#00a4ef" />
            <path d="M12.300 15.300h4.500v4.500h-4.500z" fill="#ffb900" />
          </Ic>
        </TaskItem>
        <TaskItem $w={49}>
          <Ic w={24} h={22} s="none">
            <path d="M0 8l12-8 12 8v14H0z" fill="#0f5fa8" />
            <path d="M1.500 6.500h21L12 15z" fill="#e9f5fd" />
            <path d="M0 8l12 8L0 22z" fill="#1c9be8" />
            <path d="M24 8L0 22h24z" fill="#35b3f5" />
          </Ic>
        </TaskItem>
        <TaskItem $w={49}>
          <Ic w={24} h={24} s="none">
            <circle cx="12" cy="12" r="11.800" fill="#fff" />
            <path d="M1.800 6A11.800 11.800 0 0 1 22.200 6H12L7 15z" fill="#e33b2e" />
            <path d="M22.200 6A11.800 11.800 0 0 1 11.500 23.800L17 15l0-9z" fill="#fbc116" />
            <path d="M1.800 6A11.800 11.800 0 0 0 11.500 23.800L16.600 15H7z" fill="#279847" />
            <circle cx="12" cy="12" r="5.600" fill="#fff" />
            <circle cx="12" cy="12" r="4.400" fill="#3a7de8" />
          </Ic>
        </TaskItem>
        <TaskItem $w={47} $active $open>
          <Ic w={22} h={22} s="none">
            <path d="M0 0h22v22H0z" fill="#f4f6f7" />
            <g stroke="#6a9dbf" strokeWidth="1.200">
              <path d="M11 7v8M7 11h8" stroke="#2f6690" strokeWidth="1.500" />
              <path d="M6 4v4M4 6h4M16 4v4M14 6h4M6 14v4M4 16h4M16 14v4M14 16h4" />
              <path d="M11 1.500v3M9.500 3h3M11 17.500v3M9.500 19h3M3 9.500v3M1.500 11h3M19 9.500v3M17.500 11h3" />
            </g>
          </Ic>
        </TaskItem>
        <Tray>
          <Cell $w={36}>
            <Ic w={16} h={16} s="#fff" sw={1.2}>
              <circle cx="10.500" cy="3.500" r="2.800" />
              <circle cx="5" cy="8" r="2.500" />
              <path d="M1 15.500c.3-5.500 7.500-5.500 8 0M8.500 8c3-2.500 6-.5 6.200 4" />
            </Ic>
          </Cell>
          <Cell $w={36}>
            <Ic w={12} h={8} s="#fff" sw={1.4}><path d="M1 7l5-5.500L11 7" /></Ic>
          </Cell>
          <Cell $w={15}>
            <Ic w={13} h={14} s="#aaa" sw={1.2}>
              <path d="M1 13A12 12 0 0 1 12.500 1.500M4 13a9 9 0 0 1 8.500-8.300" />
              <path d="M7 13a6 6 0 0 1 5.500-5.500M10 13a3 3 0 0 1 2.500-2.500" stroke="#fff" />
              <circle cx="11.500" cy="12.500" r="1.200" fill="#fff" stroke="none" />
            </Ic>
          </Cell>
          <Cell $w={30}>
            <Ic w={16} h={10} s="#fff" sw={1.2}>
              <path d="M.6 1h13v8H.6zM15 3v4" />
              <path d="M2.500 3h9v4h-9z" fill="#fff" stroke="none" />
            </Ic>
          </Cell>
          <Cell $w={19}>
            <Ic w={17} h={14} s="#fff" sw={1.1}>
              <path d="M.8 4.800h2.700L7 1.500v11L3.500 9.200H.8zM9 5q1.300 2 0 4M11.500 3.200q2.700 3.800 0 7.600M13.800 1.500q4 5.500 0 11" />
            </Ic>
          </Cell>
          <Cell $w={7} />
          <Cell $w={26}><Fit w={23}>ENG</Fit></Cell>
          <Clock>
            <Fit w={27}>00:16</Fit>
            <br />
            <Fit w={57}>10-10-2023</Fit>
          </Clock>
          <Cell $w={31}>
            <Ic w={17} h={17} s="none">
              <path d="M0 0h16.500v13h-5.500L8.300 16.500 5.500 13H0z" fill="#fff" />
              <path d="M3 3.500h10.500M3 6.500h10.500M3 9.500h7" stroke="#24290f" strokeWidth="1.100" />
            </Ic>
          </Cell>
          <Cell $w={12} />
          <DesktopEdge />
        </Tray>
      </Taskbar>
    </Window>
  );
}
